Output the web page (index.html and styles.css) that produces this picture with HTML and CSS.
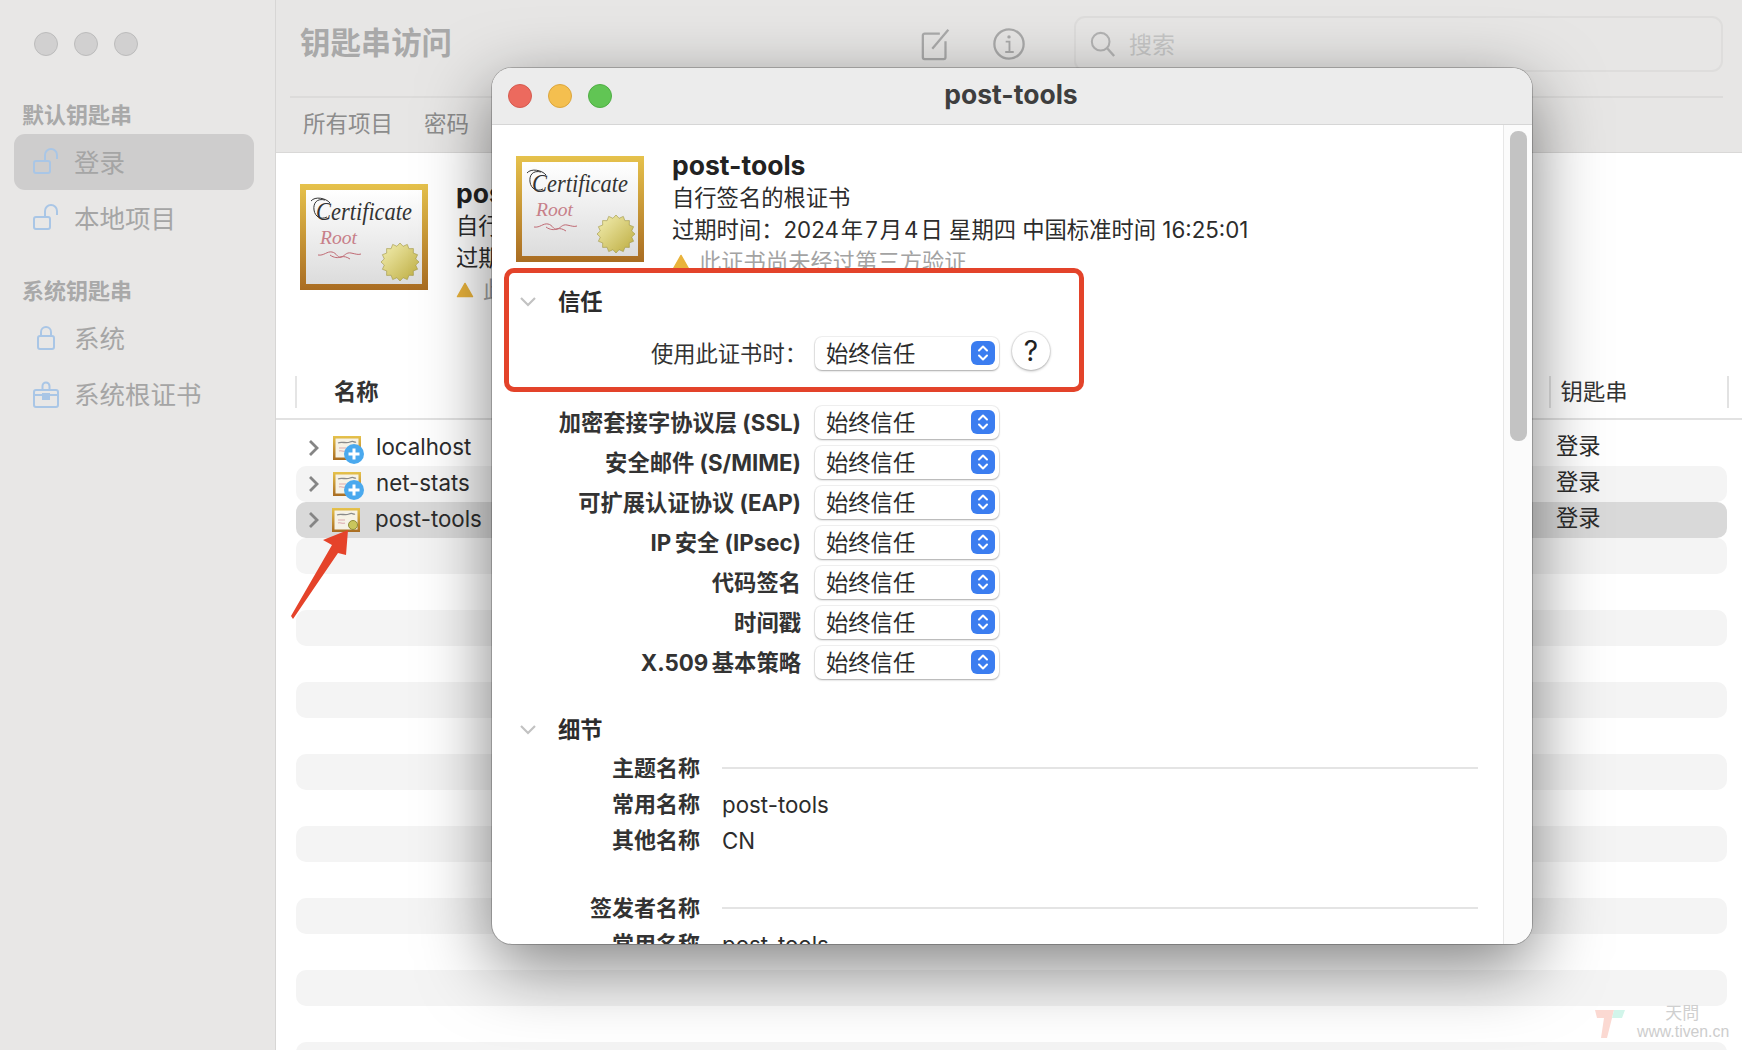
FILE: index.html
```html
<!DOCTYPE html>
<html lang="zh-CN">
<head>
<meta charset="utf-8">
<title>钥匙串访问</title>
<link rel="stylesheet" href="styles.css">
</head>
<body>
<svg class="defs" width="0" height="0" aria-hidden="true">
  <defs>
    <linearGradient id="frame" x1="0" y1="0" x2="0" y2="1"><stop offset="0" stop-color="#e6c24c"/><stop offset="1" stop-color="#a96c22"/></linearGradient>
    <linearGradient id="paper" x1="0" y1="0" x2="0" y2="1"><stop offset="0" stop-color="#ffffff"/><stop offset="1" stop-color="#dcdcdc"/></linearGradient>
    <linearGradient id="gold" x1="0" y1="0" x2="1" y2="1"><stop offset="0" stop-color="#f4f0b4"/><stop offset="1" stop-color="#bcab3e"/></linearGradient>
    <symbol id="cert" viewBox="0 0 128 106">
      <rect width="128" height="106" fill="url(#frame)"/>
      <rect x="6" y="6" width="116" height="94" fill="url(#paper)"/>
      <path d="M30 19c-4-5-15-7-19-2M25 16c-8-2-12 3-11 10s7 10 13 7" fill="none" stroke="#333" stroke-width="1"/>
      <text x="16" y="36" class="cert-script" textLength="96" lengthAdjust="spacingAndGlyphs">Certificate</text>
      <text x="20" y="60" class="cert-root" textLength="37" lengthAdjust="spacingAndGlyphs">Root</text>
      <path d="M18 71c6 1 9-4 14-3s5 6 9 5 5-5 10-4 7 2 10 1M30 71c4 3 8 3 11 2s6 0 9 2" fill="none" stroke="#c06a74" stroke-width="1"/>
      <g transform="translate(100 78)">
        <polygon points="19,0 15.7,3.1 17.6,7.3 13.3,8.9 13.4,13.4 8.9,13.3 7.3,17.6 3.1,15.7 0,19 -3.1,15.7 -7.3,17.6 -8.9,13.3 -13.4,13.4 -13.3,8.9 -17.6,7.3 -15.7,3.1 -19,0 -15.7,-3.1 -17.6,-7.3 -13.3,-8.9 -13.4,-13.4 -8.9,-13.3 -7.3,-17.6 -3.1,-15.7 0,-19 3.1,-15.7 7.3,-17.6 8.9,-13.3 13.4,-13.4 13.3,-8.9 17.6,-7.3 15.7,-3.1" fill="url(#gold)" stroke="#9d9340" stroke-width=".6"/>
      </g>
    </symbol>
    <symbol id="cert-mini" viewBox="0 0 28 24">
      <rect width="28" height="24" fill="url(#frame)"/>
      <rect x="2.500" y="2.500" width="23" height="19" fill="#f6f2e6"/>
      <path d="M5 7c4-2 8 1 12-1s4 1 6 0" fill="none" stroke="#8a8a8a" stroke-width="1.300"/>
      <path d="M6 12h7M6 15c2-1 4 1 7 0" fill="none" stroke="#dba9ae" stroke-width="1.200"/>
    </symbol>
    <symbol id="stepper" viewBox="0 0 24 24">
      <rect width="24" height="24" rx="6" fill="#3b7df0"/>
      <path d="M8 9.500l4-4 4 4M8 14.500l4 4 4-4" fill="none" stroke="#fff" stroke-width="2" stroke-linecap="round" stroke-linejoin="round"/>
    </symbol>
    <symbol id="open-lock" viewBox="0 0 28 28">
      <rect x="2" y="13" width="16" height="12" rx="2" fill="none" stroke="#a9c6e6" stroke-width="2"/>
      <path d="M13 13V7a6 6 0 0 1 12 0v4" fill="none" stroke="#a9c6e6" stroke-width="2"/>
    </symbol>
    <symbol id="chev-down" viewBox="0 0 18 12">
      <path d="M2 2l7 7 7-7" fill="none" stroke="#c2c2c2" stroke-width="2.200"/>
    </symbol>
    <symbol id="chev-right" viewBox="0 0 12 18">
      <path d="M2 2l7 7-7 7" fill="none" stroke="#858585" stroke-width="2.800"/>
    </symbol>
    <symbol id="warn" viewBox="0 0 20 18">
      <path d="M10 1.500l8.500 15h-17z" fill="#e9b33c" stroke="#e9b33c" stroke-width="1.500" stroke-linejoin="round"/>
    </symbol>
  </defs>
</svg>

<div class="app">
  <aside class="sidebar">
    <div class="lights">
      <span class="light"></span><span class="light"></span><span class="light"></span>
    </div>
    <h2 class="side-title">默认钥匙串</h2>
    <div class="side-item is-active"><svg class="side-icon"><use href="#open-lock"/></svg>登录</div>
    <div class="side-item"><svg class="side-icon"><use href="#open-lock"/></svg>本地项目</div>
    <h2 class="side-title side-title-second">系统钥匙串</h2>
    <div class="side-item"><svg class="side-icon" viewBox="0 0 28 28"><rect x="6" y="12" width="16" height="13" rx="2" fill="none" stroke="#a9c6e6" stroke-width="2"/><path d="M9 12V8a5 5 0 0 1 10 0v4" fill="none" stroke="#a9c6e6" stroke-width="2"/></svg>系统</div>
    <div class="side-item"><svg class="side-icon" viewBox="0 0 28 28"><rect x="2" y="10" width="24" height="17" rx="2" fill="none" stroke="#a9c6e6" stroke-width="2"/><path d="M2 15h24" stroke="#a9c6e6" stroke-width="2"/><rect x="10" y="13" width="8" height="7" fill="#a9c6e6"/><path d="M10.500 10V6a3.500 3.500 0 0 1 7 0v4" fill="none" stroke="#a9c6e6" stroke-width="2"/></svg>系统根证书</div>
  </aside>

  <main class="main">
    <header class="toolbar">
      <div class="toolbar-top">
        <h1 class="app-title">钥匙串访问</h1>
        <svg class="tool-icon tool-edit" viewBox="0 0 36 36"><path d="M21 7H5a2 2 0 0 0-2 2v23a2 2 0 0 0 2 2h20a2 2 0 0 0 2-2V15" fill="none" stroke="#aaa" stroke-width="2.400"/><path d="M13 23L30 3" stroke="#aaa" stroke-width="2.400"/></svg>
        <svg class="tool-icon tool-info" viewBox="0 0 36 36"><circle cx="18" cy="18" r="15.500" fill="none" stroke="#aaa" stroke-width="2.400"/><circle cx="18" cy="10.500" r="1.800" fill="#aaa"/><path d="M14.500 15.500H18.500V26M14 26.500h9" fill="none" stroke="#aaa" stroke-width="2"/></svg>
        <div class="search">
          <svg class="search-icon" viewBox="0 0 28 28"><circle cx="11.500" cy="11.500" r="9.500" fill="none" stroke="#b4b4b4" stroke-width="2.200"/><path d="M18 18l8 9" stroke="#b4b4b4" stroke-width="2.600"/></svg>
          <span class="search-text">搜索</span>
        </div>
      </div>
      <nav class="tabs"><span class="tab">所有项目</span><span class="tab">密码</span></nav>
    </header>

    <section class="summary">
      <svg class="cert-large"><use href="#cert"/></svg>
      <div class="summary-text">
        <div class="summary-name">post-tools</div>
        <div class="summary-line">自行签名的根证书</div>
        <div class="summary-line">过期时间：2024 年 7 月 4 日</div>
        <div class="summary-line cert-warn"><svg class="warn-icon"><use href="#warn"/></svg>此证书尚未经过第三方验证</div>
      </div>
    </section>

    <div class="table-head">
      <span class="col-name">名称</span>
      <span class="col-chain">钥匙串</span>
    </div>
    <div class="table-body">
      <div class="row"><svg class="row-chev"><use href="#chev-right"/></svg><span class="mini"><svg class="mini-cert"><use href="#cert-mini"/></svg><svg class="mini-badge" viewBox="0 0 20 20"><circle cx="10" cy="10" r="10" fill="#4aa9ee"/><path d="M10 4.500v11M4.500 10h11" stroke="#fff" stroke-width="3"/></svg></span><span class="row-name">localhost</span><span class="row-chain">登录</span></div>
      <div class="row"><svg class="row-chev"><use href="#chev-right"/></svg><span class="mini"><svg class="mini-cert"><use href="#cert-mini"/></svg><svg class="mini-badge" viewBox="0 0 20 20"><circle cx="10" cy="10" r="10" fill="#4aa9ee"/><path d="M10 4.500v11M4.500 10h11" stroke="#fff" stroke-width="3"/></svg></span><span class="row-name">net-stats</span><span class="row-chain">登录</span></div>
      <div class="row is-selected"><svg class="row-chev"><use href="#chev-right"/></svg><span class="mini mini-plain"><svg class="mini-cert"><use href="#cert-mini"/></svg><svg class="mini-seal" viewBox="0 0 10 10"><circle cx="5" cy="5" r="4.500" fill="#c9c65c" stroke="#8f8d3c"/></svg></span><span class="row-name">post-tools</span><span class="row-chain">登录</span></div>
      <div class="row"></div><div class="row"></div><div class="row"></div><div class="row"></div><div class="row"></div>
      <div class="row"></div><div class="row"></div><div class="row"></div><div class="row"></div><div class="row"></div>
      <div class="row"></div><div class="row"></div><div class="row"></div><div class="row"></div><div class="row"></div>
    </div>
  </main>
</div>

<section class="dialog">
  <header class="dialog-bar">
    <div class="dialog-lights"><span class="dot dot-red"></span><span class="dot dot-yellow"></span><span class="dot dot-green"></span></div>
    <div class="dialog-title">post-tools</div>
  </header>
  <div class="dialog-body">
    <div class="dialog-content">
      <div class="cert-head">
        <svg class="cert-large cert-dialog"><use href="#cert"/></svg>
        <div class="cert-info">
          <div class="cert-name">post-tools</div>
          <div class="cert-line">自行签名的根证书</div>
          <div class="cert-line">过期时间：2024&#8202;年&#8202;7&#8202;月&#8202;4&#8202;日 星期四 中国标准时间 16:25:01</div>
          <div class="cert-line cert-warn"><svg class="warn-icon"><use href="#warn"/></svg>此证书尚未经过第三方验证</div>
        </div>
      </div>

      <div class="trust-box">
        <div class="sec-head"><svg class="sec-chev"><use href="#chev-down"/></svg>信任</div>
        <div class="trust-row">
          <span class="trust-label">使用此证书时：</span>
          <div class="popup"><span class="popup-text">始终信任</span><svg class="stepper"><use href="#stepper"/></svg></div>
          <button class="help" type="button">?</button>
        </div>
      </div>

      <div class="policy">
        <div class="policy-row"><span class="policy-label">加密套接字协议层 (SSL)</span><div class="popup"><span class="popup-text">始终信任</span><svg class="stepper"><use href="#stepper"/></svg></div></div>
        <div class="policy-row"><span class="policy-label">安全邮件 (S/MIME)</span><div class="popup"><span class="popup-text">始终信任</span><svg class="stepper"><use href="#stepper"/></svg></div></div>
        <div class="policy-row"><span class="policy-label">可扩展认证协议 (EAP)</span><div class="popup"><span class="popup-text">始终信任</span><svg class="stepper"><use href="#stepper"/></svg></div></div>
        <div class="policy-row"><span class="policy-label">IP&#8201;安全 (IPsec)</span><div class="popup"><span class="popup-text">始终信任</span><svg class="stepper"><use href="#stepper"/></svg></div></div>
        <div class="policy-row"><span class="policy-label">代码签名</span><div class="popup"><span class="popup-text">始终信任</span><svg class="stepper"><use href="#stepper"/></svg></div></div>
        <div class="policy-row"><span class="policy-label">时间戳</span><div class="popup"><span class="popup-text">始终信任</span><svg class="stepper"><use href="#stepper"/></svg></div></div>
        <div class="policy-row"><span class="policy-label">X.509&#8201;基本策略</span><div class="popup"><span class="popup-text">始终信任</span><svg class="stepper"><use href="#stepper"/></svg></div></div>
      </div>

      <div class="details">
        <div class="sec-head sec-head-details"><svg class="sec-chev"><use href="#chev-down"/></svg>细节</div>
        <div class="detail-row"><span class="detail-label">主题名称</span><span class="detail-rule"></span></div>
        <div class="detail-row"><span class="detail-label">常用名称</span><span class="detail-value">post-tools</span></div>
        <div class="detail-row"><span class="detail-label">其他名称</span><span class="detail-value">CN</span></div>
        <div class="detail-row detail-group"><span class="detail-label">签发者名称</span><span class="detail-rule"></span></div>
        <div class="detail-row"><span class="detail-label">常用名称</span><span class="detail-value">post-tools</span></div>
      </div>
    </div>
    <div class="scroll-track"><div class="scroll-thumb"></div></div>
  </div>
</section>

<svg class="arrow" viewBox="0 0 70 100"><polygon points="62,1 37,11 46,16 5,87 7,90 52,24 60,26" fill="#e5432a"/></svg>

<div class="watermark">
  <svg class="wm-logo" viewBox="0 0 30 28"><path d="M0 0h19l-7 28H6l3-20H2z" fill="#fbd9d2"/><path d="M19 0h11l-3 8H17z" fill="#d2f5ea"/></svg>
  <div class="wm-text"><span class="wm-cn">天問</span><span class="wm-url">www.tiven.cn</span></div>
</div>
</body>
</html>
```
FILE: styles.css
```css
* { box-sizing: border-box; }
html, body { margin: 0; height: 100%; }
body {
  width: 1742px;
  height: 1050px;
  overflow: hidden;
  position: relative;
  background: #fff;
  font-family: "Inter", "Noto Sans CJK SC", sans-serif;
  font-size: 22.300px;
  color: #2c2c2c;
}
.defs { position: absolute; }

.app { display: flex; height: 1050px; }

/* sidebar */
.sidebar {
  width: 276px;
  flex: none;
  background: #e8e7e6;
  border-right: 1px solid #d7d6d5;
  padding: 32px 21px 0 14px;
}
.lights { display: flex; gap: 16px; padding-left: 20px; height: 24px; }
.light { width: 24px; height: 24px; border-radius: 50%; background: #d1d0d0; border: 1px solid #bcbcbc; }
.side-title { margin: 43px 0 0 8px; height: 35px; line-height: 32px; font-size: 22px; font-weight: 700; color: #a9a9a9; }
.side-title-second { margin-top: 29px; }
.side-item {
  display: flex; align-items: center; height: 56px; padding: 0 0 4px 18px;
  font-size: 25.500px; color: #a5a5a5; border-radius: 11px;
}
.side-item.is-active { background: #cecdcd; }
.side-icon { width: 28px; height: 28px; flex: none; margin: 4px 14px 0 0; }

/* main */
.main { flex: 1; min-width: 0; display: flex; flex-direction: column; }
.toolbar { height: 153px; flex: none; background: #e7e6e5; border-bottom: 1px solid #d9d8d7; padding-left: 14px; }
.toolbar-top {
  display: flex; align-items: center; height: 98px; margin-right: 19px;
  border-bottom: 2px solid #dcdbda; padding: 0 0 8px 10px;
}
.app-title { margin: 0 0 2px; flex: none; white-space: nowrap; font-size: 30.400px; font-weight: 700; color: #a9a9a9; line-height: 1; }
.tool-icon { width: 34px; height: 34px; flex: none; }
.tool-edit { margin-left: 468px; }
.tool-info { margin-left: 38px; }
.search {
  width: 649px; height: 56px; margin-left: 48px; flex: none;
  display: flex; align-items: center; padding-left: 14px;
  border: 2px solid #dedddc; border-radius: 11px;
}
.search-icon { width: 26px; height: 26px; flex: none; }
.search-text { margin-left: 13px; padding-bottom: 2px; font-size: 23px; color: #c6c6c6; }
.tabs { display: flex; gap: 31px; padding: 11px 0 0 13px; font-size: 22.500px; color: #8c8c8c; }
.tab { line-height: 30px; }

.summary { height: 223px; flex: none; display: flex; padding: 24px 0 0 24px; gap: 28px; }
.cert-large { width: 128px; height: 106px; flex: none; margin-top: 7px; }
.summary-name { font-size: 26.500px; font-weight: 700; line-height: 33px; color: #222; }
.summary-line { line-height: 32px; white-space: nowrap; }

.table-head {
  height: 44px; flex: none; display: flex; align-items: flex-start;
  border-bottom: 2px solid #e2e2e2; margin-bottom: 10px;
}
.col-name {
  margin-left: 19px; padding-left: 37px; border-left: 2px solid #e5e5e5;
  font-weight: 700; height: 32px; line-height: 32px; color: #333;
}
.col-chain {
  margin-left: 1170px; width: 180px; padding-left: 10px; height: 32px; line-height: 32px;
  border-left: 2px solid #e2e2e2; border-right: 2px solid #e2e2e2; color: #333;
}
.table-body { margin: 0 15px 0 20px; }
.row { height: 36px; display: flex; align-items: center; padding-left: 12px; border-radius: 10px; }
.row:nth-child(even) { background: #f4f4f4; }
.row.is-selected { background: #d9d9d9; }
.row-chev { width: 12px; height: 18px; flex: none; }
.mini { position: relative; width: 28px; height: 24px; flex: none; margin-left: 13px; }
.mini-plain { margin-left: 12px; }
.mini-cert { width: 28px; height: 24px; display: block; }
.mini-badge { position: absolute; left: 11px; top: 8px; width: 20px; height: 20px; }
.mini-seal { position: absolute; left: 16px; top: 12px; width: 10px; height: 10px; }
.row-name { margin-left: 15px; padding-bottom: 4px; }
.mini-plain + .row-name { margin-left: 15px; }
.row-chain { margin-left: auto; width: 171px; padding-bottom: 8px; }

/* dialog */
.dialog {
  position: absolute; left: 492px; top: 68px; width: 1040px; height: 876px;
  background: #fff; border-radius: 20px; overflow: hidden;
  display: flex; flex-direction: column;
  box-shadow: 0 0 0 1px rgba(0,0,0,.22), 0 22px 70px rgba(0,0,0,.5);
}
.dialog-bar {
  height: 57px; flex: none; position: relative; display: flex; align-items: center; justify-content: center;
  background: #ececec; border-bottom: 1px solid #d6d6d6;
}
.dialog-lights { position: absolute; left: 16px; top: 16px; display: flex; gap: 16px; }
.dot { width: 24px; height: 24px; border-radius: 50%; }
.dot-red { background: #ec6a5e; border: 1px solid #d45a4f; }
.dot-yellow { background: #f4bf4f; border: 1px solid #dca63d; }
.dot-green { background: #61c554; border: 1px solid #4fae44; }
.dialog-title { font-size: 26.500px; font-weight: 700; color: #3e3e3e; padding: 0 2px 4px 0; }
.dialog-body { flex: 1; min-height: 0; display: flex; }
.dialog-content { flex: 1; min-width: 0; overflow: hidden; padding-left: 12px; }
.scroll-track { width: 29px; flex: none; background: #fbfbfb; border-left: 1px solid #e7e7e7; padding: 6px 5px 0 6px; }
.scroll-thumb { height: 310px; border-radius: 8px; background: #c3c3c3; }

.cert-head { height: 143px; display: flex; gap: 28px; padding: 23px 0 0 12px; overflow: hidden; }
.cert-dialog { margin-top: 8px; }
.cert-name { font-size: 26.500px; font-weight: 700; line-height: 34px; color: #222; }
.cert-line { line-height: 32px; color: #2c2c2c; white-space: nowrap; }
.cert-warn { display: flex; align-items: center; color: #a3a3a3; }
.warn-icon { width: 18px; height: 16px; margin-right: 9px; flex: none; }

.trust-box {
  width: 580px; height: 124px; background: #fff;
  border: 5px solid #e3432a; border-radius: 10px;
}
.sec-head { display: flex; align-items: center; height: 60px; padding: 0 0 6px 49px; font-weight: 700; color: #2c2c2c; position: relative; }
.sec-chev { position: absolute; left: 10px; top: 50%; margin-top: -7px; width: 18px; height: 12px; }
.trust-row { display: flex; align-items: center; height: 40px; }
.trust-label { width: 298px; margin-right: -6px; padding-bottom: 2px; text-align: right; color: #333; white-space: nowrap; }
.popup {
  width: 184px; height: 33px; margin-left: 14px; flex: none;
  display: flex; align-items: center; justify-content: space-between; padding: 0 4px 0 11px;
  background: #fff; border-radius: 7px;
  box-shadow: 0 0 0 1px rgba(0,0,0,.05), 0 1px 2px rgba(0,0,0,.3);
}
.popup-text { padding-bottom: 2px; }
.stepper { width: 24px; height: 24px; flex: none; }
.help {
  width: 38px; height: 38px; margin: -4px 0 0 13px; padding: 0; flex: none;
  border: 0; border-radius: 50%; background: #fff;
  box-shadow: 0 0 0 1px rgba(0,0,0,.06), 0 1px 3px rgba(0,0,0,.3);
  font: 28px "Inter", sans-serif; color: #222;
}

.policy { padding-top: 10px; }
.policy-row { display: flex; align-items: center; height: 40px; }
.policy-label { width: 297px; padding-bottom: 3px; text-align: right; font-weight: 700; color: #333; white-space: nowrap; }

.details { padding-top: 28px; }
.sec-head-details { height: 40px; padding-left: 54px; padding-bottom: 4px; }
.sec-head-details .sec-chev { left: 15px; margin-top: -6px; }
.detail-row { display: flex; align-items: center; height: 36px; }
.detail-group { margin-top: 32px; }
.detail-label { width: 196px; flex: none; padding-bottom: 4px; text-align: right; font-size: 22px; font-weight: 700; color: #333; }
.detail-value { margin-left: 22px; }
.detail-rule { width: 756px; height: 2px; margin-left: 22px; background: #e4e4e4; }

/* annotation */
.arrow { position: absolute; left: 286px; top: 529px; width: 70px; height: 100px; }

/* watermark */
.watermark { position: absolute; left: 1595px; top: 1005px; display: flex; gap: 12px; align-items: flex-start; }
.wm-logo { width: 30px; height: 28px; margin-top: 5px; flex: none; }
.wm-text { display: flex; flex-direction: column; align-items: flex-end; line-height: 1; }
.wm-cn { font-family: "Liberation Serif", "Noto Sans CJK TC", serif; font-size: 17px; color: #cfcfcf; margin-right: 30px; }
.wm-url { font-family: "Liberation Sans", sans-serif; font-size: 15.800px; color: #cdcdcd; margin-top: 2px; }

.cert-script { font-family: "Liberation Serif", serif; font-style: italic; font-size: 25px; fill: #333; }
.cert-root { font-family: "Liberation Serif", serif; font-style: italic; font-size: 18px; fill: #c77f89; }
```
